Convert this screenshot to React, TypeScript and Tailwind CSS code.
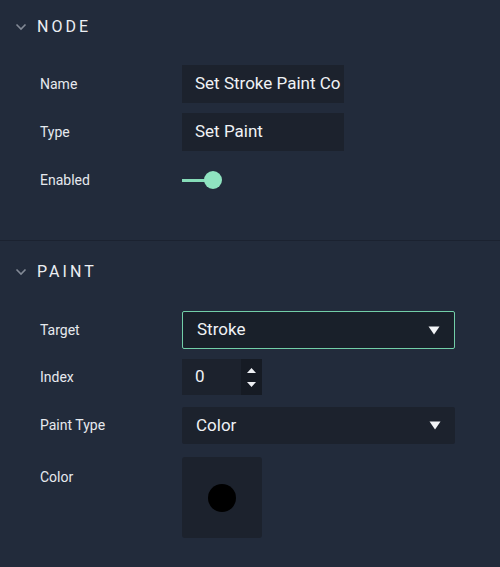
import React from "react";

const font = { fontFamily: "Roboto, 'Noto Sans', sans-serif" };

function Chevron() {
  return (
    <svg width="12" height="8" viewBox="0 0 12 8" className="shrink-0">
      <path d="M1.5 1.5 L6 6 L10.5 1.5" fill="none" stroke="#838a96" strokeWidth="1.6" />
    </svg>
  );
}

function Caret() {
  return (
    <svg width="12" height="9" viewBox="0 0 12 9">
      <path d="M0.5 0.5 H11.5 L6 8.5 Z" fill="#f2f4f7" />
    </svg>
  );
}

function Header({ title, h }: { title: string; h: string }) {
  return (
    <div className={`flex items-center ${h} pl-[15px] gap-[10px]`}>
      <Chevron />
      <span className="text-[16px] tracking-[0.19em] text-[#eceff3]">{title}</span>
    </div>
  );
}

function Row({ label, children, h, cls = "" }: { label: string; children: React.ReactNode; h: string; cls?: string }) {
  return (
    <div className={`grid grid-cols-[142px_1fr] items-center ${h} ${cls}`}>
      <span className="text-[14px] text-[#e6e9ee]">{label}</span>
      {children}
    </div>
  );
}

export default function App() {
  return (
    <div className="w-[500px] h-[567px] bg-[#222b3b] overflow-hidden" style={font}>
      <div className="h-[241px] border-b border-[#1b2230]">
        <Header title="NODE" h="h-[54px]" />
        <div className="pl-[40px] pt-[11px] flex flex-col gap-[10px]">
          <Row label="Name" h="h-[38px]">
            <div className="w-[162px] h-[38px] bg-[#1c222d] flex items-center pl-[13px] overflow-hidden whitespace-nowrap text-[17px] text-[#f0f2f5]">
              Set Stroke Paint Co
            </div>
          </Row>
          <Row label="Type" h="h-[38px]">
            <div className="w-[162px] h-[38px] bg-[#1c222d] flex items-center pl-[13px] text-[17px] text-[#f0f2f5]">
              Set Paint
            </div>
          </Row>
          <Row label="Enabled" h="h-[38px]">
            <div className="relative w-[42px] h-[18px] flex items-center">
              <div className="w-[30px] h-[3px] bg-[#86dcb8]" />
              <div className="absolute left-[22px] top-0 w-[18px] h-[18px] rounded-full bg-[#8fe3c0]" />
            </div>
          </Row>
        </div>
      </div>
      <Header title="PAINT" h="h-[61px]" />
      <div className="pl-[40px] pt-[9px] flex flex-col">
        <Row label="Target" h="h-[38px]">
          <div className="w-[273px] h-[38px] bg-[#19202a] border border-[#72cfa8] rounded-[2px] flex items-center justify-between pl-[14px] pr-[14px] text-[17px] text-[#f0f2f5]">
            <span>Stroke</span>
            <Caret />
          </div>
        </Row>
        <Row label="Index" h="h-[36px]" cls="mt-[10px]">
          <div className="w-[80px] h-[36px] bg-[#1c222d] flex">
            <div className="flex-1 flex items-center pl-[13px] text-[17px] text-[#f0f2f5]">0</div>
            <div className="w-[21px] bg-[#161b24] flex flex-col items-center justify-center gap-[9px]">
              <svg width="9" height="5" viewBox="0 0 9 5"><path d="M0 5 L4.5 0 L9 5 Z" fill="#eef0f4" /></svg>
              <svg width="9" height="5" viewBox="0 0 9 5"><path d="M0 0 H9 L4.5 5 Z" fill="#eef0f4" /></svg>
            </div>
          </div>
        </Row>
        <Row label="Paint Type" h="h-[37px]" cls="mt-[12px]">
          <div className="w-[273px] h-[37px] bg-[#1c222d] rounded-[2px] flex items-center justify-between pl-[14px] pr-[14px] text-[17px] text-[#f0f2f5]">
            <span>Color</span>
            <Caret />
          </div>
        </Row>
        <div className="grid grid-cols-[142px_1fr] items-start mt-[13px]">
          <span className="text-[14px] text-[#e6e9ee] mt-[10px]">Color</span>
          <div className="w-[80px] h-[81px] bg-[#1c222d] rounded-[3px] flex items-center justify-center">
            <div className="w-[28px] h-[28px] rounded-full bg-black" />
          </div>
        </div>
      </div>
    </div>
  );
}
